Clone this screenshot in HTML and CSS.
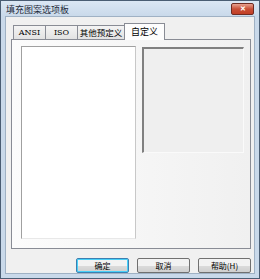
FILE: index.html
```html
<!DOCTYPE html>
<html lang="zh-CN">
<head>
    <meta charset="UTF-8">
    <title>填充图案选项板</title>
    <link rel="stylesheet" href="styles.css">
</head>
<body>
    <div class="window">
        <div class="titlebar">
            <span class="title">填充图案选项板</span>
            <button class="close">&#x2715;</button>
        </div>
        <div class="client">
            <div class="tabs">
                <div class="tab">ANSI</div>
                <div class="tab">ISO</div>
                <div class="tab">其他预定义</div>
                <div class="tab active">自定义</div>
            </div>
            <div class="panel">
                <div class="list"></div>
                <div class="preview"></div>
            </div>
            <div class="buttons">
                <button class="btn">确定</button>
                <button class="btn">取消</button>
                <button class="btn">帮助(H)</button>
            </div>
        </div>
    </div>
</body>
</html>
```

FILE: styles.css
```css
body {
    margin: 0;
    width: 260px;
    height: 279px;
    overflow: hidden;
    font-family: "Noto Sans CJK SC", "DejaVu Sans", sans-serif;
    font-size: 9px;
    background: #ffffff;
}
.window {
    width: 258px;
    height: 277px;
    border: 1px solid #4a5d73;
    background: #c9d9ea;
    display: flex;
    flex-direction: column;
}
.titlebar {
    height: 22px;
    display: flex;
    align-items: center;
    padding: 0 5px 0 5px;
    background: linear-gradient(#dbe7f4, #c9d9ea);
}
.title {
    flex: 1;
    color: #1e2b3a;
    font-size: 9px;
    margin-top: 2px;
}
.close {
    width: 23px;
    height: 12px;
    padding: 0;
    margin-top: 0;
    border: 1px solid #6e2b22;
    border-radius: 2px;
    background: linear-gradient(#e8a290, #c94f37 50%, #c13e25);
    color: #ffffff;
    font-size: 7px;
    font-weight: bold;
    line-height: 10px;
}
.client {
    flex: 1;
    margin: 0 4px 5px 4px;
    border: 1px solid #9fb1c4;
    background: #f0f0f0;
    padding: 5px 3px 0 5px;
    display: flex;
    flex-direction: column;
}
.tabs {
    display: flex;
    align-items: flex-end;
    height: 17px;
    padding-left: 2px;
    position: relative;
    z-index: 1;
}
.tab {
    height: 13px;
    line-height: 13px;
    margin-right: -1px;
    border: 1px solid #898c95;
    border-bottom: none;
    background: linear-gradient(#f4f4f4, #e2e2e2);
    font-family: "DejaVu Serif", serif;
    font-size: 8px;
    color: #000000;
    text-align: center;
}
.tab:nth-child(1) { width: 31px; }
.tab:nth-child(2) { width: 31px; }
.tab:nth-child(3) {
    width: 46px;
    font-family: "Noto Sans CJK SC", sans-serif;
    font-size: 8.5px;
}
.tab.active {
    width: 39px;
    height: 16px;
    line-height: 15px;
    background: #fdfdfd;
    font-family: "Noto Sans CJK SC", sans-serif;
    font-size: 9px;
    margin-bottom: -1px;
}
.panel {
    height: 202px;
    border: 1px solid #898c95;
    background: linear-gradient(90deg, #fcfcfc, #f0f0f0);
    display: flex;
    align-items: flex-start;
    gap: 6px;
    padding: 6px 5px 0 9px;
}
.list {
    width: 113px;
    height: 191px;
    background: #ffffff;
    border: 1px solid #a0a0a0;
    border-right-color: #c8c8c8;
    border-bottom-color: #e8e8e8;
}
.preview {
    width: 99px;
    height: 103px;
    margin-top: 1px;
    background: #efefef;
    border-top: 2px solid #808080;
    border-left: 2px solid #808080;
    border-right: 1px solid #fafafa;
    border-bottom: 1px solid #fafafa;
}
.buttons {
    display: flex;
    justify-content: flex-end;
    gap: 8px;
    margin-top: 9px;
}
.btn {
    width: 53px;
    height: 15px;
    padding: 0;
    border: 1px solid #707070;
    border-radius: 2px;
    background: linear-gradient(#f2f2f2 50%, #dcdcdc 50%, #cfcfcf);
    font-family: "Noto Sans CJK SC", sans-serif;
    font-size: 8px;
    line-height: 13px;
    color: #000000;
}
.btn:first-child {
    border-color: #3c7fb1;
    box-shadow: inset 0 0 0 1px #48d0f8;
}
```
